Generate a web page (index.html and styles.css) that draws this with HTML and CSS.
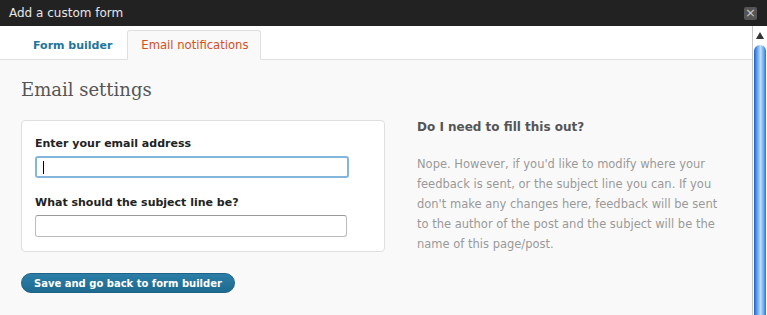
FILE: index.html
```html
<!DOCTYPE html>
<html lang="en">
<head>
    <meta charset="UTF-8">
    <title>Add a custom form</title>
    <link rel="stylesheet" href="styles.css">
</head>
<body>
    <div class="titlebar">
        <span class="title">Add a custom form</span>
        <span class="close">&times;</span>
    </div>

    <div class="frame">
        <div class="main">
            <div class="tabs">
                <a class="tab">Form builder</a>
                <a class="tab tab-active">Email notifications</a>
            </div>

            <div class="content">
                <h2>Email settings</h2>
                <div class="columns">
                    <div class="card">
                        <label>Enter your email address</label>
                        <div class="input focused"><span class="caret"></span></div>
                        <label>What should the subject line be?</label>
                        <div class="input"></div>
                    </div>
                    <div class="help">
                        <h4>Do I need to fill this out?</h4>
                        <p>Nope. However, if you'd like to modify where your feedback is sent, or the subject line you can. If you don't make any changes here, feedback will be sent to the author of the post and the subject will be the name of this page/post.</p>
                    </div>
                </div>
                <button class="btn">Save and go back to form builder</button>
            </div>
        </div>

        <div class="scrollbar">
            <div class="arrow"></div>
            <div class="thumb"></div>
        </div>
    </div>
</body>
</html>
```

FILE: styles.css
```css
body {
    margin: 0;
    font-family: "DejaVu Sans", sans-serif;
    background: #f9f9f9;
    overflow: hidden;
}
.titlebar {
    height: 26px;
    background: #222;
    color: #e6e6e6;
    display: flex;
    align-items: center;
    justify-content: space-between;
    padding: 0 10px 0 9px;
    box-sizing: border-box;
}
.title {
    font-size: 12px;
}
.close {
    width: 13px;
    height: 13px;
    background: #555;
    border-radius: 2px;
    color: #ccc;
    font-size: 13px;
    line-height: 12px;
    text-align: center;
}
.frame {
    display: flex;
    height: 289px;
}
.main {
    flex: 1;
}
.tabs {
    background: #fff;
    height: 33px;
    border-bottom: 1px solid #dfdfdf;
    display: flex;
    align-items: flex-end;
    padding-left: 23px;
}
.tab {
    font-size: 11px;
    font-weight: bold;
    color: #21759b;
    padding: 0 10px;
    line-height: 28px;
    margin-bottom: -1px;
}
.tab-active {
    font-size: 11.6px;
    font-weight: normal;
    color: #d54e21;
    background: #f9f9f9;
    border: 1px solid #dfdfdf;
    border-bottom-color: #f9f9f9;
    border-radius: 3px 3px 0 0;
    margin-left: 5px;
    padding: 0 12px 0 13px;
}
.content {
    padding: 17px 21px 0;
}
h2 {
    font-family: "DejaVu Serif", Georgia, serif;
    font-weight: normal;
    font-size: 18px;
    color: #555;
    margin: 2px 0 20px;
}
.columns {
    display: flex;
    align-items: flex-start;
    gap: 32px;
}
.card {
    width: 336px;
    background: #fff;
    border: 1px solid #dfdfdf;
    border-radius: 4px;
    padding: 14px 13px 14px;
}
label {
    display: block;
    font-size: 11px;
    font-weight: bold;
    color: #222;
    margin: 2px 0 6px;
}
.input {
    width: 310px;
    height: 20px;
    border: 1px solid #bbb;
    border-top-color: #999;
    border-radius: 3px;
    background: #fff;
}
.focused {
    border: 2px solid #84b5db;
    height: 18px;
    margin-bottom: 18px;
    display: flex;
    align-items: center;
}
.caret {
    width: 1px;
    height: 13px;
    background: #000;
    margin-left: 6px;
}
.help {
    flex: 1;
}
.help h4 {
    font-size: 12px;
    color: #555;
    margin: 0 0 20px;
}
.help p {
    font-size: 11.5px;
    line-height: 20px;
    color: #999;
    margin: 0 0 -10px;
    width: 310px;
}
.btn {
    margin-top: 21px;
    background: linear-gradient(#2b7ea7, #1e6a8f);
    border: 1px solid #1d6385;
    border-radius: 11px;
    color: #fff;
    font-family: "DejaVu Sans", sans-serif;
    font-size: 10px;
    font-weight: bold;
    height: 20px;
    padding: 0 12px;
}
.scrollbar {
    width: 15px;
    background: #fff;
    border-left: 1px solid #c8c8c8;
    box-sizing: border-box;
    display: flex;
    flex-direction: column;
    align-items: center;
}
.arrow {
    margin-top: 6px;
    width: 0;
    height: 0;
    border-left: 4px solid transparent;
    border-right: 4px solid transparent;
    border-bottom: 7px solid #333;
}
.thumb {
    margin-top: 6px;
    width: 12px;
    flex: 1;
    border-radius: 6px 6px 0 0;
    background: linear-gradient(90deg, #1f5fcf, #8cc0f3 40%, #bfe0fb 55%, #5d9eea 85%, #2a6bd4);
}
```
